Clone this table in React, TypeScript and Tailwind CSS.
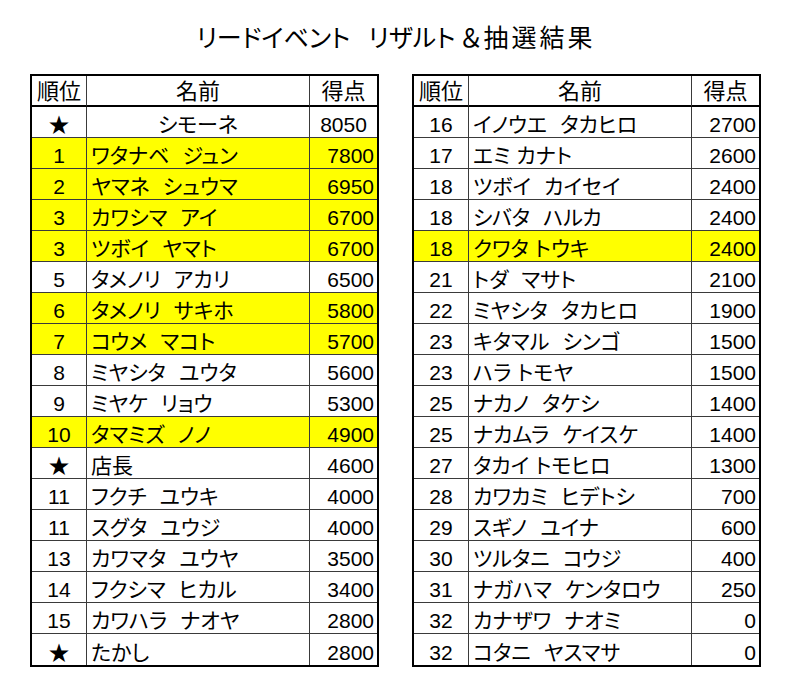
type Row = {
  rank: string;
  name: string;
  score: string;
  hl?: boolean;
  center?: boolean;
};

const LEFT: Row[] = [
  { rank: "★", name: "シモーネ", score: "8050", center: true },
  { rank: "1", name: "ワタナベ　ジュン", score: "7800", hl: true },
  { rank: "2", name: "ヤマネ　シュウマ", score: "6950", hl: true },
  { rank: "3", name: "カワシマ　アイ", score: "6700", hl: true },
  { rank: "3", name: "ツボイ　ヤマト", score: "6700", hl: true },
  { rank: "5", name: "タメノリ　アカリ", score: "6500" },
  { rank: "6", name: "タメノリ　サキホ", score: "5800", hl: true },
  { rank: "7", name: "コウメ　マコト", score: "5700", hl: true },
  { rank: "8", name: "ミヤシタ　ユウタ", score: "5600" },
  { rank: "9", name: "ミヤケ　リョウ", score: "5300" },
  { rank: "10", name: "タマミズ　ノノ", score: "4900", hl: true },
  { rank: "★", name: "店長", score: "4600" },
  { rank: "11", name: "フクチ　ユウキ", score: "4000" },
  { rank: "11", name: "スグタ　ユウジ", score: "4000" },
  { rank: "13", name: "カワマタ　ユウヤ", score: "3500" },
  { rank: "14", name: "フクシマ　ヒカル", score: "3400" },
  { rank: "15", name: "カワハラ　ナオヤ", score: "2800" },
  { rank: "★", name: "たかし", score: "2800" },
];

const RIGHT: Row[] = [
  { rank: "16", name: "イノウエ　タカヒロ", score: "2700" },
  { rank: "17", name: "エミ カナト", score: "2600" },
  { rank: "18", name: "ツボイ　カイセイ", score: "2400" },
  { rank: "18", name: "シバタ　ハルカ", score: "2400" },
  { rank: "18", name: "クワタ トウキ", score: "2400", hl: true },
  { rank: "21", name: "トダ　マサト", score: "2100" },
  { rank: "22", name: "ミヤシタ　タカヒロ", score: "1900" },
  { rank: "23", name: "キタマル　シンゴ", score: "1500" },
  { rank: "23", name: "ハラ トモヤ", score: "1500" },
  { rank: "25", name: "ナカノ　タケシ", score: "1400" },
  { rank: "25", name: "ナカムラ　ケイスケ", score: "1400" },
  { rank: "27", name: "タカイ トモヒロ", score: "1300" },
  { rank: "28", name: "カワカミ　ヒデトシ", score: "700" },
  { rank: "29", name: "スギノ　ユイナ", score: "600" },
  { rank: "30", name: "ツルタニ　コウジ", score: "400" },
  { rank: "31", name: "ナガハマ　ケンタロウ", score: "250" },
  { rank: "32", name: "カナザワ　ナオミ", score: "0" },
  { rank: "32", name: "コタニ　ヤスマサ", score: "0" },
];

const cell = "flex items-end pb-[2px] leading-none border-[#3a3a3a]";

// full-width spaces render too wide in the fallback font, so swap them for a fixed gap
function Name({ text }: { text: string }) {
  const parts = text.split("　");
  return (
    <span className="flex items-end">
      {parts.map((p, i) => (
        <span key={i} className="flex items-end">
          {i > 0 && <span className="inline-block w-[13px]" />}
          <span className="whitespace-pre">{p}</span>
        </span>
      ))}
    </span>
  );
}

function ResultTable({ rows }: { rows: Row[] }) {
  return (
    <div className="grid h-[593px] w-[349px] grid-cols-[55px_223px_1fr] grid-rows-[repeat(19,minmax(0,1fr))] border-2 border-black">
      <div className={`${cell} justify-center border-r border-b-2 border-b-black text-[22px]`}>順位</div>
      <div className={`${cell} justify-center border-r border-b-2 border-b-black text-[22px]`}>名前</div>
      <div className={`${cell} justify-center border-b-2 border-b-black text-[22px]`}>得点</div>
      {rows.map((r, i) => {
        const last = i === rows.length - 1;
        const bg = r.hl ? "bg-[#ffff00]" : "bg-white";
        const bb = last ? "" : "border-b";
        return [
          <div key={`r${i}`} className={`${cell} ${bg} ${bb} justify-center border-r`}>
            {r.rank}
          </div>,
          <div
            key={`n${i}`}
            className={`${cell} ${bg} ${bb} border-r ${r.center ? "justify-center" : "pl-[4px]"}`}
          >
            <Name text={r.name} />
          </div>,
          <div
            key={`s${i}`}
            className={`${cell} ${bg} ${bb} ${r.center ? "justify-center" : "justify-end pr-[3px]"}`}
          >
            {r.score}
          </div>,
        ];
      })}
    </div>
  );
}

export default function App() {
  return (
    <div className="h-[699px] w-[800px] bg-white text-[21px] text-black [font-family:'Liberation_Sans','Noto_Sans_CJK_JP',sans-serif] [font-feature-settings:'palt']">
      <h1 className="flex justify-center pt-[23px] pr-[8px] text-[25px] leading-[30px]">
        <span>リードイベント</span>
        <span className="ml-[18px]">リザルト</span>
        <span className="ml-[3px] [font-feature-settings:normal]">＆</span>
        <span className="tracking-[3px]">抽選結果</span>
      </h1>
      <div className="mt-[21px] flex gap-[33px] pl-[30px]">
        <ResultTable rows={LEFT} />
        <ResultTable rows={RIGHT} />
      </div>
    </div>
  );
}
